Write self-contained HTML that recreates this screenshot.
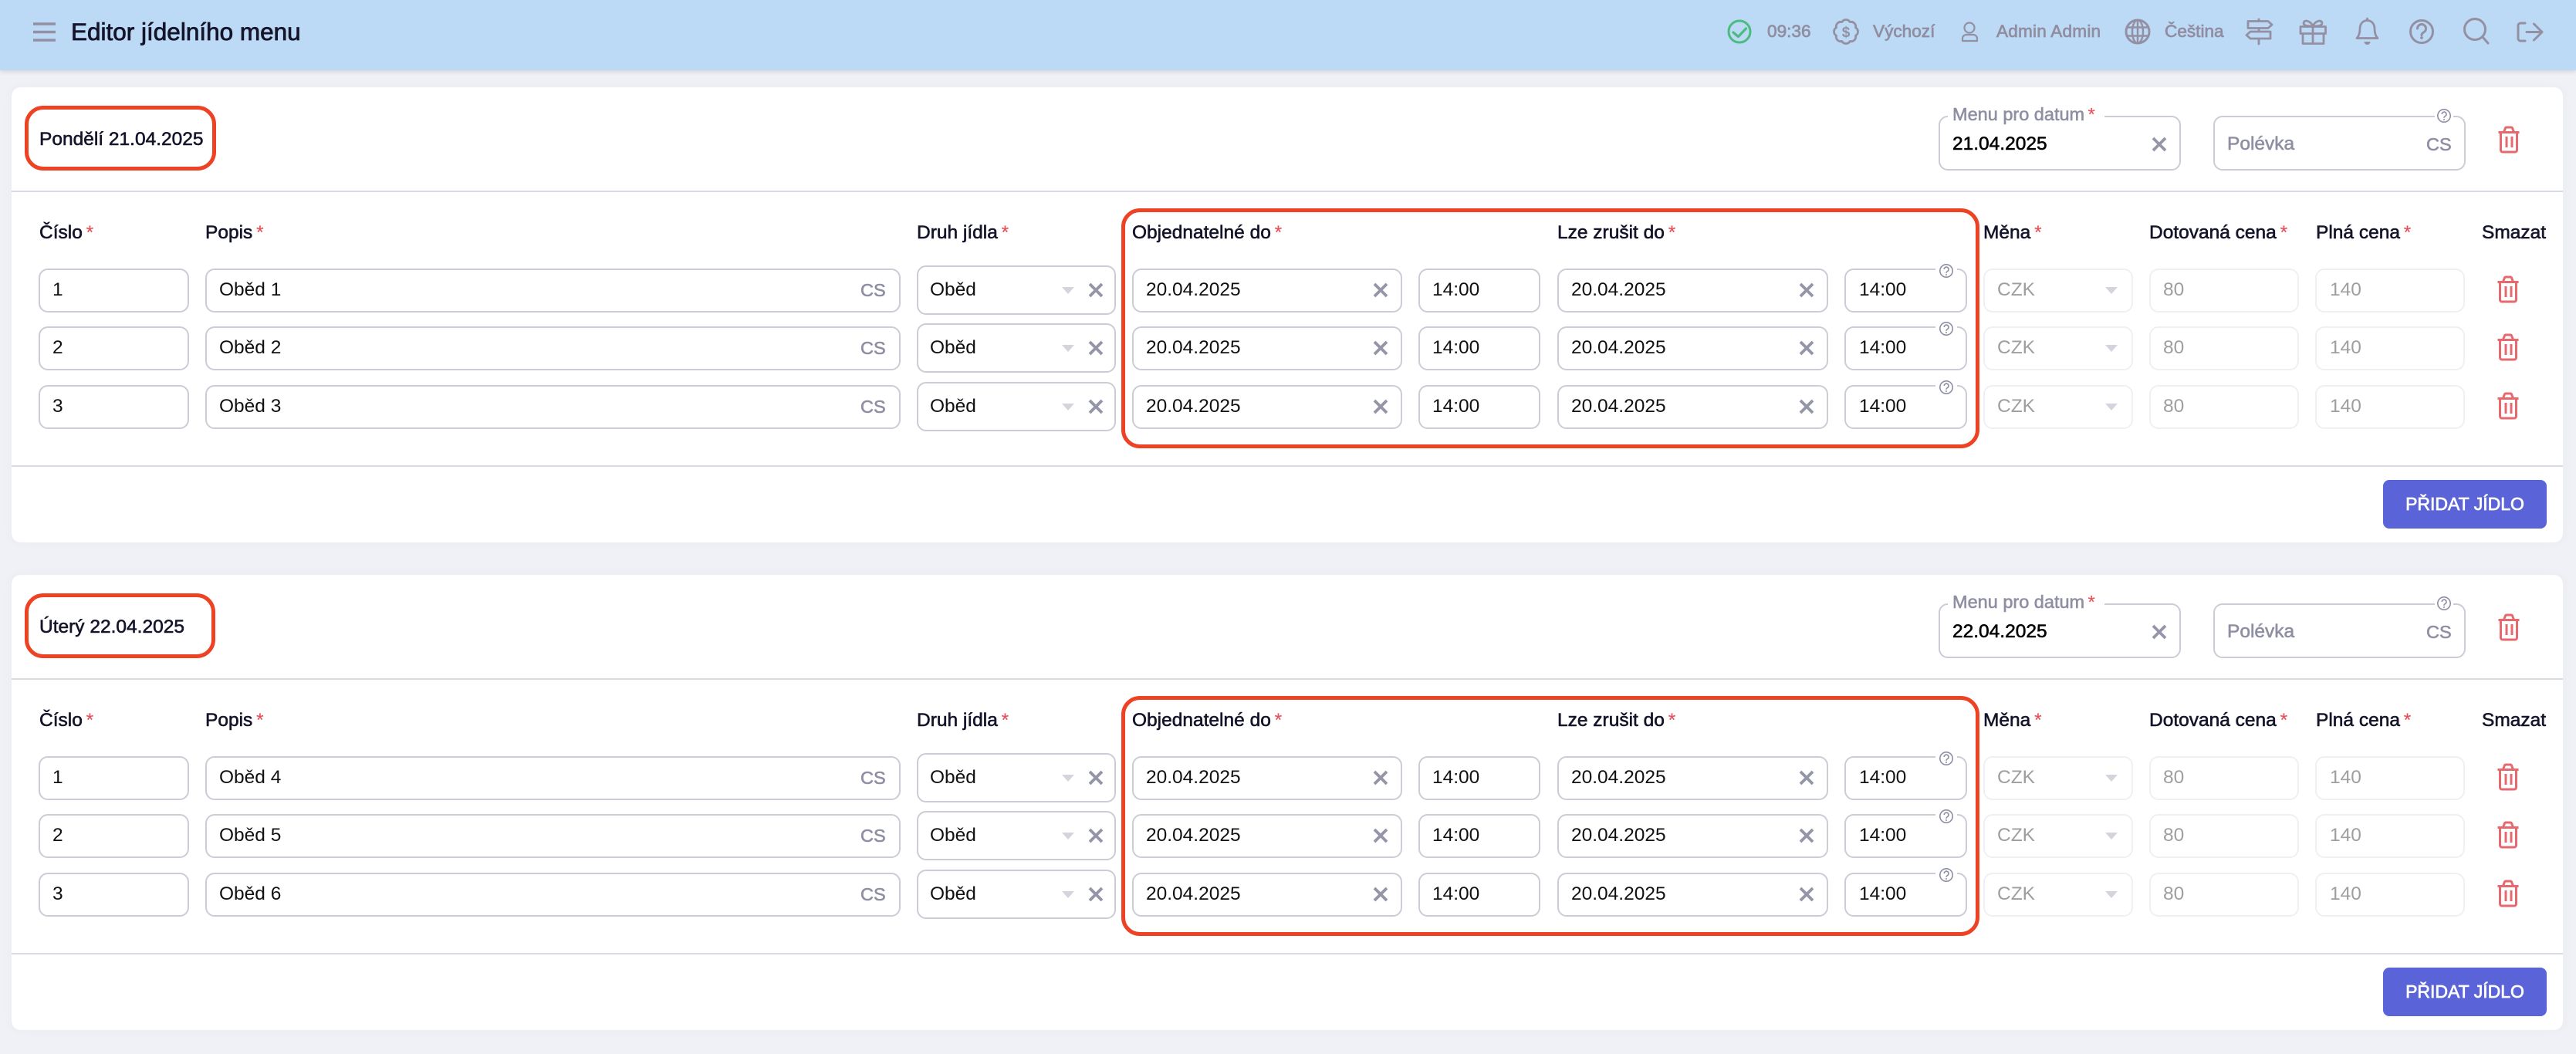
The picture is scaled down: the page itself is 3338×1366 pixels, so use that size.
<!DOCTYPE html>
<html lang="cs"><head><meta charset="utf-8"><title>Editor jídelního menu</title>
<style>
*{box-sizing:border-box}
html,body{margin:0;padding:0}
body{position:relative;width:3338px;height:1366px;overflow:hidden;background:#f0f1f6;font-family:"Liberation Sans",sans-serif;color:#14142a}
.hdr{position:absolute;left:0;top:0;width:3338px;height:91px;background:#bcdaf5;box-shadow:0 1px 6px rgba(60,60,90,.22)}
.abs,.t,.b,.card,.red,.line,.btn,.n,.ic{position:absolute}
.h{position:absolute;top:26px;line-height:30px;font-size:22.6px;color:#908da1;-webkit-text-stroke:.7px #908da1;white-space:nowrap}
.title{position:absolute;left:92px;top:21px;line-height:40px;font-size:31.5px;color:#14142a;-webkit-text-stroke:.8px #14142a;white-space:nowrap}
.day{position:absolute;left:0;width:3338px;height:600px}
.card{left:15px;top:113px;width:3306px;height:590px;background:#fff;border-radius:12px;box-shadow:0 0 14px rgba(80,80,120,.04)}
.line{left:15px;width:3306px;height:2px;background:#d9dae2}
.red{border:5px solid #ee4225;background:transparent}
.t{line-height:30px;font-size:24.5px;white-space:nowrap}
.d{left:51px;top:166px;color:#14142a;-webkit-text-stroke:.6px #14142a}
.l{top:287px;color:#14142a;-webkit-text-stroke:.6px #14142a}
.l i{font-style:normal;color:#e8515c;-webkit-text-stroke:.2px #e8515c;margin-left:-2px}
.row{position:absolute;left:0;width:3338px;top:0;height:0}
.b{top:348px;height:57px;border:2px solid #cbccd6;border-radius:12px;background:#fff;padding-top:11px;line-height:30px;font-size:24.5px;color:#111;white-space:nowrap}
.dis{border-color:#f0f0f4;color:#9e9e9e}
.s{top:344px;height:64px;padding-top:15px}
.c1{left:50px;width:195px;padding-left:16px}
.c2{left:266px;width:901px;padding-left:16px}
.c3{left:1188px;width:258px;padding-left:15px}
.c4{left:1467px;width:350px;padding-left:16px}
.c5{left:1838px;width:158px;padding-left:16px}
.c6{left:2018px;width:351px;padding-left:16px}
.c7{left:2390px;width:159px;padding-left:17px}
.c8{left:2570px;width:194px;padding-left:16px}
.c9{left:2785px;width:194px;padding-left:16px}
.c10{left:3000px;width:194px;padding-left:17px}
.cs{position:absolute;top:361px;left:1115px;line-height:30px;font-size:23.5px;color:#8f8fa3;-webkit-text-stroke:.6px #8f8fa3}
.ic{overflow:visible}
.x{width:20px;height:20px;color:#9496a8}
.arr{width:16px;height:9px;top:372px}
.tr{width:30px;height:36px;left:3235px;top:357px}
.q{width:20px;height:20px;top:341px;left:2512px}
.n{background:#fff;height:4px;top:347px;left:2508px;width:28px}
.btn{left:3088px;top:622px;width:212px;height:63px;border-radius:8px;background:#5a64d8;color:#fff;text-align:center;line-height:62px;font-size:23px;-webkit-text-stroke:.7px #fff;white-space:nowrap}
</style></head><body>
<svg width="0" height="0" style="position:absolute">
<symbol id="xi" viewBox="0 0 20 20"><path d="M2 2L18 18M18 2L2 18" fill="none" stroke="currentColor" stroke-width="3.8"/></symbol>
<symbol id="ar" viewBox="0 0 16 9"><path d="M0 0H16L8 9Z" fill="#d3d4dc"/></symbol>
<symbol id="tr" viewBox="0 0 30 36"><path d="M1.5 8.5h27M4.5 8.5v23a2.5 2.5 0 0 0 2.5 2.5h16a2.5 2.5 0 0 0 2.500-2.500v-23M8.500 8l1.800-4.500a2 2 0 0 1 1.700-1.500h6a2 2 0 0 1 1.700 1.500l1.800 4.500M12 14v14M19 14v14" fill="none" stroke="#e5696f" stroke-width="3"/></symbol>
<symbol id="qi" viewBox="0 0 20 20"><circle cx="10" cy="10" r="8.200" fill="#fff" stroke="#8e8fa5" stroke-width="1.600"/><path d="M7.200 8a2.900 2.900 0 1 1 4.400 2.500c-1 .6-1.600 1.100-1.600 2.300" fill="none" stroke="#8e8fa5" stroke-width="1.600"/><circle cx="10" cy="15" r="1" fill="#8e8fa5"/></symbol>
</svg>

<div class="hdr"></div>
<div class="title">Editor jídelního menu</div>
<svg class="abs" style="left:0;top:0" width="3338" height="90" viewBox="0 0 3338 90" fill="none" stroke="#9490a3" stroke-width="2.800" stroke-linecap="round" stroke-linejoin="round">
<path d="M43 31H72M43 41.500H72M43 52H72" stroke-width="3.500" stroke-linecap="butt"/>
<circle cx="2254" cy="41" r="14" stroke="#4cbb80" stroke-width="3"/>
<path d="M2246 42l6.500 5.500 10-10.500" stroke="#4cbb80" stroke-width="3.200"/>
<path transform="translate(2392 41)" d="M12.500 -5.200A6 6 0 0 1 12.500 5.200A6 6 0 0 1 5.200 12.500A6 6 0 0 1 -5.200 12.500A6 6 0 0 1 -12.500 5.200A6 6 0 0 1 -12.500 -5.200A6 6 0 0 1 -5.200 -12.500A6 6 0 0 1 5.200 -12.500A6 6 0 0 1 12.500 -5.200Z"/>
<circle cx="2552" cy="36" r="6.500" stroke-width="2.200"/>
<path d="M2543 53v-3a5 5 0 0 1 5-5h9a5 5 0 0 1 5 5v3z" stroke-width="2.200"/>
<circle cx="2770" cy="41" r="15" stroke-width="3"/>
<ellipse cx="2770" cy="41" rx="7" ry="15" stroke-width="2.500"/>
<path d="M2757 35.500H2783M2757 46.500H2783M2770 26V56" stroke-width="2.500"/>
<path d="M2913 27.500h26l5 4.500-5 4.500h-26zM2942 41h-26l-5 4.500 5 4.500h26zM2927 25v2.500M2927 36.500v4.500M2927 50v7"/>
<path d="M2981 34.500h32.500v9h-32.500zM2984 43.500h27v13h-27zM2997 34.500v22M2997 34c-2-6-11-10-12-4 0 3 5 4 12 4zM2997 34c2-6 11-10 12-4 0 3-5 4-12 4z"/>
<path d="M3054 49.500h27c-3-3-4-7-4-12.500 0-6-4-10.500-9.500-10.500s-9.500 4.500-9.500 10.500c0 5.500-1 9.500-4 12.500zM3067.500 24v2"/>
<path d="M3063.500 54h8a4 4 0 0 1-8 0z" fill="#9490a3" stroke="none"/>
<circle cx="3138" cy="41" r="14.500" stroke-width="3"/>
<path d="M3132.500 37a5.500 5.500 0 1 1 8.500 4.600c-2 1.300-3 2-3 4" stroke-width="3"/>
<circle cx="3138" cy="49" r="1.400" fill="#9490a3" stroke-width="1"/>
<circle cx="3207" cy="38" r="13.500" stroke-width="3"/>
<path d="M3217 48L3224 56" stroke-width="3"/>
<path d="M3272 30h-6a3 3 0 0 0-3 3v17a3 3 0 0 0 3 3h6M3274 41.500h20M3283.500 31l10.500 10.500-10.500 10.500" stroke-width="3"/>
<text x="2392" y="48" text-anchor="middle" font-family="Liberation Sans" font-size="19" font-weight="700" fill="#9490a3" stroke="none">$</text>
</svg>
<span class="h" style="left:2290px">09:36</span>
<span class="h" style="left:2427px">Výchozí</span>
<span class="h" style="left:2587px;letter-spacing:.2px">Admin Admin</span>
<span class="h" style="left:2805px">Čeština</span>

<div class="day" style="top:0">
<div class="card"></div>
<div class="red" style="left:32px;top:137px;width:248px;height:84px;border-radius:24px"></div>
<div class="t d">Pondělí 21.04.2025</div>
<div class="b" style="left:2512px;top:150px;width:314px;height:71px;padding:20px 0 0 16px;color:#000;-webkit-text-stroke:.6px #000">21.04.2025</div>
<div class="n" style="left:2524px;top:148px;width:203px;height:5px"></div>
<div class="t" style="left:2530px;top:133px;color:#8f8fa3;-webkit-text-stroke:.6px #8f8fa3;font-size:23.500px">Menu pro datum <span style="color:#e8515c;-webkit-text-stroke:.2px #e8515c;margin-left:-2px">*</span></div>
<svg class="ic x" style="left:2788px;top:177px"><use href="#xi"/></svg>
<div class="b" style="left:2868px;top:150px;width:327px;height:71px;padding:20px 0 0 16px;color:#8f8fa3;-webkit-text-stroke:.6px #8f8fa3">Polévka</div>
<div class="cs" style="left:3144px;top:172px">CS</div>
<div class="n" style="left:3155px;top:148px;width:24px;height:5px"></div>
<svg class="ic q" style="left:3157px;top:140px"><use href="#qi"/></svg>
<svg class="ic tr" style="left:3236px;top:163px"><use href="#tr"/></svg>
<div class="line" style="top:247px"></div>
<div class="red" style="left:1453px;top:270px;width:1112px;height:311px;border-radius:24px"></div>
<div class="t l" style="left:51px">Číslo <i>*</i></div>
<div class="t l" style="left:266px">Popis <i>*</i></div>
<div class="t l" style="left:1188px">Druh jídla <i>*</i></div>
<div class="t l" style="left:1467px">Objednatelné do <i>*</i></div>
<div class="t l" style="left:2018px">Lze zrušit do <i>*</i></div>
<div class="t l" style="left:2570px">Měna <i>*</i></div>
<div class="t l" style="left:2785px">Dotovaná cena <i>*</i></div>
<div class="t l" style="left:3001px">Plná cena <i>*</i></div>
<div class="t l" style="left:3216px">Smazat</div>

<div class="row" style="top:0">
<div class="b c1">1</div><div class="b c2">Oběd 1</div><div class="cs">CS</div>
<div class="b s c3">Oběd</div><svg class="ic arr" style="left:1376px"><use href="#ar"/></svg><svg class="ic x" style="left:1410px;top:366px"><use href="#xi"/></svg>
<div class="b c4">20.04.2025</div><svg class="ic x" style="left:1779px;top:366px"><use href="#xi"/></svg>
<div class="b c5">14:00</div>
<div class="b c6">20.04.2025</div><svg class="ic x" style="left:2331px;top:366px"><use href="#xi"/></svg>
<div class="b c7">14:00</div><div class="n"></div><svg class="ic q"><use href="#qi"/></svg>
<div class="b dis c8">CZK</div><svg class="ic arr" style="left:2728px"><use href="#ar"/></svg>
<div class="b dis c9">80</div><div class="b dis c10">140</div>
<svg class="ic tr"><use href="#tr"/></svg>
</div>
<div class="row" style="top:75px">
<div class="b c1">2</div><div class="b c2">Oběd 2</div><div class="cs">CS</div>
<div class="b s c3">Oběd</div><svg class="ic arr" style="left:1376px"><use href="#ar"/></svg><svg class="ic x" style="left:1410px;top:366px"><use href="#xi"/></svg>
<div class="b c4">20.04.2025</div><svg class="ic x" style="left:1779px;top:366px"><use href="#xi"/></svg>
<div class="b c5">14:00</div>
<div class="b c6">20.04.2025</div><svg class="ic x" style="left:2331px;top:366px"><use href="#xi"/></svg>
<div class="b c7">14:00</div><div class="n"></div><svg class="ic q"><use href="#qi"/></svg>
<div class="b dis c8">CZK</div><svg class="ic arr" style="left:2728px"><use href="#ar"/></svg>
<div class="b dis c9">80</div><div class="b dis c10">140</div>
<svg class="ic tr"><use href="#tr"/></svg>
</div>
<div class="row" style="top:151px">
<div class="b c1">3</div><div class="b c2">Oběd 3</div><div class="cs">CS</div>
<div class="b s c3">Oběd</div><svg class="ic arr" style="left:1376px"><use href="#ar"/></svg><svg class="ic x" style="left:1410px;top:366px"><use href="#xi"/></svg>
<div class="b c4">20.04.2025</div><svg class="ic x" style="left:1779px;top:366px"><use href="#xi"/></svg>
<div class="b c5">14:00</div>
<div class="b c6">20.04.2025</div><svg class="ic x" style="left:2331px;top:366px"><use href="#xi"/></svg>
<div class="b c7">14:00</div><div class="n"></div><svg class="ic q"><use href="#qi"/></svg>
<div class="b dis c8">CZK</div><svg class="ic arr" style="left:2728px"><use href="#ar"/></svg>
<div class="b dis c9">80</div><div class="b dis c10">140</div>
<svg class="ic tr"><use href="#tr"/></svg>
</div>
<div class="line" style="top:603px"></div>
<div class="btn">PŘIDAT JÍDLO</div>
</div>

<div class="day" style="top:632px">
<div class="card"></div>
<div class="red" style="left:32px;top:137px;width:247px;height:84px;border-radius:24px"></div>
<div class="t d">Úterý 22.04.2025</div>
<div class="b" style="left:2512px;top:150px;width:314px;height:71px;padding:20px 0 0 16px;color:#000;-webkit-text-stroke:.6px #000">22.04.2025</div>
<div class="n" style="left:2524px;top:148px;width:203px;height:5px"></div>
<div class="t" style="left:2530px;top:133px;color:#8f8fa3;-webkit-text-stroke:.6px #8f8fa3;font-size:23.500px">Menu pro datum <span style="color:#e8515c;-webkit-text-stroke:.2px #e8515c;margin-left:-2px">*</span></div>
<svg class="ic x" style="left:2788px;top:177px"><use href="#xi"/></svg>
<div class="b" style="left:2868px;top:150px;width:327px;height:71px;padding:20px 0 0 16px;color:#8f8fa3;-webkit-text-stroke:.6px #8f8fa3">Polévka</div>
<div class="cs" style="left:3144px;top:172px">CS</div>
<div class="n" style="left:3155px;top:148px;width:24px;height:5px"></div>
<svg class="ic q" style="left:3157px;top:140px"><use href="#qi"/></svg>
<svg class="ic tr" style="left:3236px;top:163px"><use href="#tr"/></svg>
<div class="line" style="top:247px"></div>
<div class="red" style="left:1453px;top:270px;width:1112px;height:311px;border-radius:24px"></div>
<div class="t l" style="left:51px">Číslo <i>*</i></div>
<div class="t l" style="left:266px">Popis <i>*</i></div>
<div class="t l" style="left:1188px">Druh jídla <i>*</i></div>
<div class="t l" style="left:1467px">Objednatelné do <i>*</i></div>
<div class="t l" style="left:2018px">Lze zrušit do <i>*</i></div>
<div class="t l" style="left:2570px">Měna <i>*</i></div>
<div class="t l" style="left:2785px">Dotovaná cena <i>*</i></div>
<div class="t l" style="left:3001px">Plná cena <i>*</i></div>
<div class="t l" style="left:3216px">Smazat</div>

<div class="row" style="top:0">
<div class="b c1">1</div><div class="b c2">Oběd 4</div><div class="cs">CS</div>
<div class="b s c3">Oběd</div><svg class="ic arr" style="left:1376px"><use href="#ar"/></svg><svg class="ic x" style="left:1410px;top:366px"><use href="#xi"/></svg>
<div class="b c4">20.04.2025</div><svg class="ic x" style="left:1779px;top:366px"><use href="#xi"/></svg>
<div class="b c5">14:00</div>
<div class="b c6">20.04.2025</div><svg class="ic x" style="left:2331px;top:366px"><use href="#xi"/></svg>
<div class="b c7">14:00</div><div class="n"></div><svg class="ic q"><use href="#qi"/></svg>
<div class="b dis c8">CZK</div><svg class="ic arr" style="left:2728px"><use href="#ar"/></svg>
<div class="b dis c9">80</div><div class="b dis c10">140</div>
<svg class="ic tr"><use href="#tr"/></svg>
</div>
<div class="row" style="top:75px">
<div class="b c1">2</div><div class="b c2">Oběd 5</div><div class="cs">CS</div>
<div class="b s c3">Oběd</div><svg class="ic arr" style="left:1376px"><use href="#ar"/></svg><svg class="ic x" style="left:1410px;top:366px"><use href="#xi"/></svg>
<div class="b c4">20.04.2025</div><svg class="ic x" style="left:1779px;top:366px"><use href="#xi"/></svg>
<div class="b c5">14:00</div>
<div class="b c6">20.04.2025</div><svg class="ic x" style="left:2331px;top:366px"><use href="#xi"/></svg>
<div class="b c7">14:00</div><div class="n"></div><svg class="ic q"><use href="#qi"/></svg>
<div class="b dis c8">CZK</div><svg class="ic arr" style="left:2728px"><use href="#ar"/></svg>
<div class="b dis c9">80</div><div class="b dis c10">140</div>
<svg class="ic tr"><use href="#tr"/></svg>
</div>
<div class="row" style="top:151px">
<div class="b c1">3</div><div class="b c2">Oběd 6</div><div class="cs">CS</div>
<div class="b s c3">Oběd</div><svg class="ic arr" style="left:1376px"><use href="#ar"/></svg><svg class="ic x" style="left:1410px;top:366px"><use href="#xi"/></svg>
<div class="b c4">20.04.2025</div><svg class="ic x" style="left:1779px;top:366px"><use href="#xi"/></svg>
<div class="b c5">14:00</div>
<div class="b c6">20.04.2025</div><svg class="ic x" style="left:2331px;top:366px"><use href="#xi"/></svg>
<div class="b c7">14:00</div><div class="n"></div><svg class="ic q"><use href="#qi"/></svg>
<div class="b dis c8">CZK</div><svg class="ic arr" style="left:2728px"><use href="#ar"/></svg>
<div class="b dis c9">80</div><div class="b dis c10">140</div>
<svg class="ic tr"><use href="#tr"/></svg>
</div>
<div class="line" style="top:603px"></div>
<div class="btn">PŘIDAT JÍDLO</div>
</div>
</body></html>
